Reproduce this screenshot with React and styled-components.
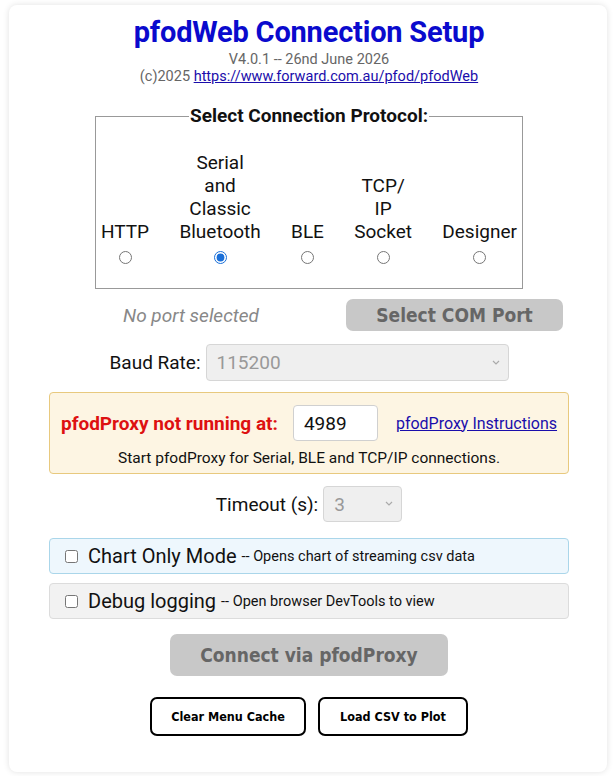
import React from 'react';
import styled, { createGlobalStyle } from 'styled-components';

const GlobalStyle = createGlobalStyle`
  html, body {
    margin: 0;
    background: #ffffff;
  }
  body {
    font-family: Roboto, "Liberation Sans", sans-serif;
    color: #111;
  }
`;

const Page = styled.div`
  padding: 5px 6px 4px 9px;
`;

const Card = styled.div`
  height: 767px;
  box-sizing: border-box;
  background: #fff;
  border-radius: 8px;
  box-shadow: 0 0 6px rgba(0, 0, 0, 0.12);
  padding: 11px 38px 0 40px;
  display: flex;
  flex-direction: column;
`;

const Title = styled.h1`
  margin: 0;
  font-size: 29px;
  line-height: 32px;
  font-weight: 700;
  color: #0a0acd;
  text-align: center;
  letter-spacing: -0.2px;
`;

const Meta = styled.div`
  margin-top: ${(p) => p.$mt || 0}px;
  font-size: 14.5px;
  line-height: 17px;
  color: #666;
  text-align: center;

  a {
    color: #1a0dab;
  }
`;

const Protocols = styled.fieldset`
  margin: 21px 46px 0;
  padding: 0 5px 24px;
  border: 1px solid #999;
  min-width: 0;
`;

const Legend = styled.legend`
  margin: 0 auto;
  padding: 0 1px;
  font-size: 19px;
  line-height: 20px;
  font-weight: 700;
`;

const OptionRow = styled.div`
  margin-top: 25px;
  display: flex;
  justify-content: space-between;
  align-items: flex-end;
`;

const Option = styled.label`
  display: flex;
  flex-direction: column;
  align-items: center;
  text-align: center;
  font-size: 19px;
  line-height: 23px;

  input {
    margin: 8px 0 0;
    width: 13px;
    height: 13px;
    accent-color: #1a6fd8;
  }
`;

const PortRow = styled.div`
  margin-top: 10px;
  display: grid;
  grid-template-columns: 1fr 217px;
  column-gap: 13px;
  align-items: center;
  padding-right: 6px;
`;

const PortStatus = styled.span`
  text-align: center;
  font-style: italic;
  font-size: 19px;
  color: #888;
`;

const GreyButton = styled.button`
  height: ${(p) => p.$h}px;
  width: ${(p) => p.$w || 'auto'};
  border: none;
  border-radius: 7px;
  background: #c8c8c8;
  color: #666;
  font-family: "DejaVu Sans Condensed", "DejaVu Sans", sans-serif;
  font-stretch: condensed;
  font-weight: 700;
  font-size: 19px;
  padding: 0;
`;

const FieldRow = styled.div`
  margin-top: ${(p) => p.$mt}px;
  display: flex;
  justify-content: center;
  align-items: center;
  gap: 5px;
  font-size: 19px;
`;

const SelectWrap = styled.div`
  position: relative;
  width: ${(p) => p.$w}px;
  height: ${(p) => p.$h}px;
`;

const Select = styled.select`
  appearance: none;
  width: 100%;
  height: 100%;
  box-sizing: border-box;
  border: 1px solid #d6d6d6;
  border-radius: 4px;
  background: #efefef;
  color: #999;
  font-family: Roboto, sans-serif;
  font-size: 19px;
  padding: 0 0 0 10px;
  opacity: 1;
`;

const Chevron = styled.svg`
  position: absolute;
  right: 9px;
  top: 50%;
  margin-top: -3px;
  pointer-events: none;
`;

const ProxyBox = styled.div`
  margin-top: 11px;
  padding: 12px 0 6px;
  background: #fdf5e3;
  border: 1px solid #e8c97e;
  border-radius: 4px;
  text-align: center;
`;

const ProxyRow = styled.div`
  display: flex;
  justify-content: center;
  align-items: center;
`;

const ProxyWarn = styled.span`
  color: #dd1111;
  font-weight: 700;
  font-size: 19px;
`;

const PortInput = styled.input`
  margin: 0 18px 0 15px;
  width: 85px;
  height: 36px;
  box-sizing: border-box;
  border: 1px solid #d0d0d0;
  border-radius: 4px;
  font-family: Roboto, sans-serif;
  font-size: 19px;
  color: #111;
  padding: 0 0 0 10px;
`;

const ProxyLink = styled.a`
  color: #1a0dab;
  font-size: 16px;
`;

const ProxyHint = styled.div`
  margin-top: 9px;
  font-size: 15.5px;
  line-height: 17px;
`;

const OptionBox = styled.label`
  margin-top: ${(p) => p.$mt}px;
  height: 36px;
  box-sizing: border-box;
  display: flex;
  align-items: center;
  padding-left: 15px;
  border: 1px solid ${(p) => (p.$blue ? '#aad6ea' : '#dcdcdc')};
  background: ${(p) => (p.$blue ? '#eef7fd' : '#f2f2f2')};
  border-radius: 4px;
  font-size: 20px;

  input {
    margin: 0 10px 0 0;
    width: 13px;
    height: 13px;
  }

  small {
    font-size: 14.5px;
    margin-left: 5px;
  }
`;

const ConnectRow = styled.div`
  margin-top: 15px;
  display: flex;
  justify-content: center;
`;

const ButtonRow = styled.div`
  margin-top: 21px;
  display: flex;
  justify-content: center;
  gap: 12px;
`;

const OutlineButton = styled.button`
  width: ${(p) => p.$w}px;
  height: 39px;
  background: #fff;
  border: 2px solid #000;
  border-radius: 7px;
  color: #000;
  font-family: "DejaVu Sans Condensed", "DejaVu Sans", sans-serif;
  font-stretch: condensed;
  font-weight: 700;
  font-size: 12.5px;
  padding: 0;
`;

const protocols = [
  { id: 'http', lines: ['HTTP'] },
  { id: 'serial', lines: ['Serial', 'and', 'Classic', 'Bluetooth'], checked: true },
  { id: 'ble', lines: ['BLE'] },
  { id: 'tcp', lines: ['TCP/', 'IP', 'Socket'] },
  { id: 'designer', lines: ['Designer'] },
];

const ChevronIcon = () => (
  <Chevron width="8" height="5" viewBox="0 0 8 5">
    <path d="M1 1l3 3 3-3" fill="none" stroke="#aaa" strokeWidth="1.2" />
  </Chevron>
);

const App = () => {
  return (
    <Page>
      <GlobalStyle />
      <Card>
        <Title>pfodWeb Connection Setup</Title>
        <Meta $mt={3}>V4.0.1 -- 26nd June 2026</Meta>
        <Meta>
          (c)2025 <a href="#">https://www.forward.com.au/pfod/pfodWeb</a>
        </Meta>

        <Protocols>
          <Legend>Select Connection Protocol:</Legend>
          <OptionRow>
            {protocols.map((p) => (
              <Option key={p.id}>
                {p.lines.map((l) => (
                  <span key={l}>{l}</span>
                ))}
                <input type="radio" name="protocol" defaultChecked={p.checked} />
              </Option>
            ))}
          </OptionRow>
        </Protocols>

        <PortRow>
          <PortStatus>No port selected</PortStatus>
          <GreyButton $h={32} disabled>
            Select COM Port
          </GreyButton>
        </PortRow>

        <FieldRow $mt={13}>
          <span>Baud Rate:</span>
          <SelectWrap $w={303} $h={37}>
            <Select disabled defaultValue="115200">
              <option>115200</option>
            </Select>
            <ChevronIcon />
          </SelectWrap>
        </FieldRow>

        <ProxyBox>
          <ProxyRow>
            <ProxyWarn>pfodProxy not running at:</ProxyWarn>
            <PortInput defaultValue="4989" />
            <ProxyLink href="#">pfodProxy Instructions</ProxyLink>
          </ProxyRow>
          <ProxyHint>Start pfodProxy for Serial, BLE and TCP/IP connections.</ProxyHint>
        </ProxyBox>

        <FieldRow $mt={12}>
          <span>Timeout (s):</span>
          <SelectWrap $w={79} $h={36}>
            <Select disabled defaultValue="3">
              <option>3</option>
            </Select>
            <ChevronIcon />
          </SelectWrap>
        </FieldRow>

        <OptionBox $mt={16} $blue>
          <input type="checkbox" />
          Chart Only Mode <small>-- Opens chart of streaming csv data</small>
        </OptionBox>
        <OptionBox $mt={9}>
          <input type="checkbox" />
          Debug logging <small>-- Open browser DevTools to view</small>
        </OptionBox>

        <ConnectRow>
          <GreyButton $h={42} $w="278px" disabled>
            Connect via pfodProxy
          </GreyButton>
        </ConnectRow>

        <ButtonRow>
          <OutlineButton $w={156}>Clear Menu Cache</OutlineButton>
          <OutlineButton $w={150}>Load CSV to Plot</OutlineButton>
        </ButtonRow>
      </Card>
    </Page>
  );
};

export default App;
